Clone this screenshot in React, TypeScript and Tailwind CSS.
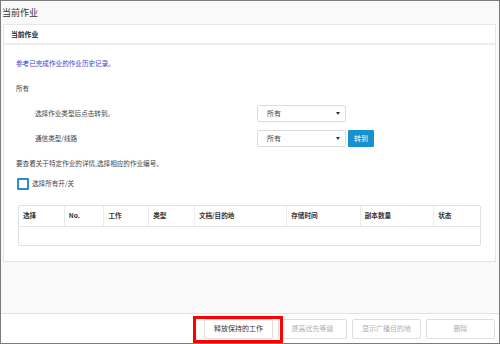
const FONT = "font-['Noto_Sans_CJK_SC','Noto_Sans',sans-serif]";

const columns = [
  { label: "选择", w: "w-[46px]" },
  { label: "No.", w: "w-[40px]" },
  { label: "工作", w: "w-[45px]" },
  { label: "类型", w: "w-[46px]" },
  { label: "文档/目的地", w: "w-[93px]" },
  { label: "存储时间", w: "w-[74px]" },
  { label: "副本数量", w: "w-[74px]" },
  { label: "状态", w: "w-[46px]" },
];

function Select() {
  return (
    <div className="flex h-[17px] w-[89px] items-center justify-between rounded-[2px] border border-[#dcdcdc] bg-white pl-[9px] pr-[5px] text-[7px] text-[#444]">
      <span>所有</span>
      <span className="h-0 w-0 border-x-[2.5px] border-t-[3px] border-x-transparent border-t-[#333]" />
    </div>
  );
}

function FooterButton({ label, disabled }: { label: string; disabled?: boolean }) {
  return (
    <button
      className={`flex h-[20px] w-[69px] items-center justify-center rounded-[2px] border border-[#dedede] bg-white text-[7px] ${
        disabled ? "text-[#b0b0b0]" : "text-[#333]"
      }`}
    >
      {label}
    </button>
  );
}

export default function App() {
  return (
    <div className={`flex h-[344px] w-[500px] flex-col border border-[#7b7b7b] bg-[#f9f9f9] ${FONT}`}>
      <div className="flex h-[23px] items-center px-[1px] text-[9px] text-[#333]">当前作业</div>

      <div className="mx-[2px] mr-[3px] flex flex-col border border-[#e6e6e6] bg-white">
        <div className="flex h-[20px] items-center border-b-2 border-[#ededed] pl-[7px] text-[6.8px] font-bold text-[#222]">
          当前作业
        </div>

        <div className="flex flex-col pt-[6px] pb-[15px] text-[6.6px] text-[#444]">
          <div className="flex h-[25px] items-center pl-[12px] text-[#3a3ad8]">参考已完成作业的作业历史记录。</div>
          <div className="flex h-[25px] items-center pl-[12px]">所有</div>
          <div className="flex h-[25px] items-center pl-[31px]">
            <span className="w-[222px]">选择作业类型后点击转到。</span>
            <Select />
          </div>
          <div className="flex h-[25px] items-center pl-[31px]">
            <span className="w-[222px]">通信类型/线路</span>
            <Select />
            <button className="ml-[2px] flex h-[17px] w-[26px] items-center justify-center rounded-[1px] bg-[#1791cf] text-[7px] text-white">
              转到
            </button>
          </div>
          <div className="flex h-[25px] items-center pl-[12px]">要查看关于特定作业的详情,选择相应的作业编号。</div>
          <div className="flex h-[16px] items-center gap-[3px] pl-[13px]">
            <span className="h-[12px] w-[12px] rounded-[1px] border-2 border-[#2a8bd2] bg-white" />
            <span>选择所有开/关</span>
          </div>

          <div className="mx-[14px] mt-[13px] flex flex-col rounded-[2px] border border-[#e0e0e0]">
            <div className="flex h-[21px] border-b border-[#e6e6e6]">
              {columns.map((c, i) => (
                <div
                  key={c.label}
                  className={`${c.w} flex items-center pl-[4px] font-semibold text-[#333] ${
                    i < columns.length - 1 ? "border-r border-[#ececec]" : ""
                  }`}
                >
                  {c.label}
                </div>
              ))}
            </div>
            <div className="h-[18px]" />
          </div>
        </div>
      </div>

      <div className="flex-1" />

      <div className="flex h-[30px] items-center justify-end gap-[5px] border-t border-[#e2e2e2] bg-white pr-[4px]">
        <div className="relative">
          <FooterButton label="释放保持的工作" />
          <span className="absolute -top-[3px] -bottom-[4px] -left-[11px] -right-[10px] border-[3px] border-[#ff0000]" />
        </div>
        <FooterButton label="提高优先等级" disabled />
        <FooterButton label="显示广播目的地" disabled />
        <FooterButton label="删除" disabled />
      </div>
    </div>
  );
}
